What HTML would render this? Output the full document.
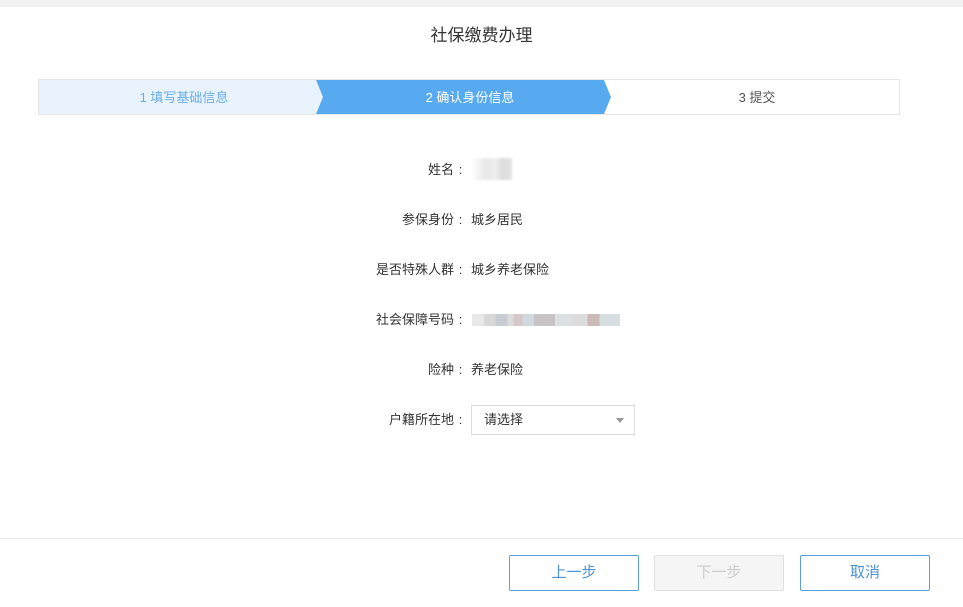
<!DOCTYPE html>
<html><head><meta charset="utf-8"><style>
body{margin:0;width:963px;height:607px;background:#fff;font-family:"Liberation Sans","Noto Sans CJK SC",sans-serif;position:relative;overflow:hidden;color:#333}
.top{position:absolute;left:0;top:0;width:963px;height:7px;background:#f2f2f2}
.title{position:absolute;top:21px;left:0;width:963px;text-align:center;font-size:17px;color:#333}
.steps{position:absolute;left:38px;top:79px;width:860px;height:34px;border:1px solid #e6e6e6}
.row{position:absolute;left:0;width:467px;text-align:right;font-size:13px;line-height:16px;color:#333}
.row i{font-style:normal;display:inline-block;width:13px;text-align:center}
.val{position:absolute;left:471px;font-size:13px;line-height:16px;color:#333}
.blur{position:absolute;height:12px}
.sel{position:absolute;left:471px;top:405px;width:162px;height:28px;border:1px solid #ddd;font-size:13px;line-height:28px;box-sizing:content-box}
.line{position:absolute;left:0;top:538px;width:963px;height:1px;background:#e8e8e8}
.btn{position:absolute;top:555px;width:128px;height:34px;border:1px solid #5aa1dc;border-radius:2px;text-align:center;line-height:34px;font-size:15px;color:#4d94d6;background:#fff}
</style></head><body>
<div class="top"></div>
<div class="title">社保缴费办理</div>
<div class="steps">
<svg width="860" height="34" style="position:absolute;left:0;top:0">
<polygon points="0,0 277,0 284,17 277,34 0,34" fill="#e8f3fd"/>
<polygon points="277,0 565,0 572,17 565,34 277,34 284,17" fill="#57aaf0"/>
<text x="145" y="22" font-size="13" fill="#6aaee6" text-anchor="middle" font-family="Liberation Sans, Noto Sans CJK SC, sans-serif">1 填写基础信息</text>
<text x="431" y="22" font-size="13" fill="#fff" text-anchor="middle" font-family="Liberation Sans, Noto Sans CJK SC, sans-serif">2 确认身份信息</text>
<text x="718" y="22" font-size="13" fill="#555" text-anchor="middle" font-family="Liberation Sans, Noto Sans CJK SC, sans-serif">3 提交</text>
</svg></div>
<div class="row" style="top:162px">姓名<i>:</i></div>
<div class="blur" style="left:474px;top:158px;width:38px;height:22px;background:linear-gradient(90deg,#fafafa,#e8e8e8 30%,#eee 55%,#dcdcdc 75%,#e4e4e4);filter:blur(1px)"></div>
<div class="row" style="top:212px">参保身份<i>:</i></div><div class="val" style="top:212px">城乡居民</div>
<div class="row" style="top:262px">是否特殊人群<i>:</i></div><div class="val" style="top:262px">城乡养老保险</div>
<div class="row" style="top:312px">社会保障号码<i>:</i></div>
<div class="blur" style="left:472px;top:314px;width:148px;background:linear-gradient(90deg,#e8e8e8 0 8%,#d8d8d8 8% 16%,#c9ccd1 16% 24%,#ddd 24% 28%,#d5c8c6 28% 34%,#d0dadd 34% 42%,#c8c4c6 42% 56%,#dde0e2 56% 68%,#dcdcdc 68% 78%,#c9b9b8 78% 86%,#d8dde0 86%)"></div>
<div class="row" style="top:362px">险种<i>:</i></div><div class="val" style="top:362px">养老保险</div>
<div class="row" style="top:412px">户籍所在地<i>:</i></div>
<div class="sel"><span style="margin-left:12px">请选择</span><span style="position:absolute;right:10px;top:12px;width:0;height:0;border-left:4px solid transparent;border-right:4px solid transparent;border-top:5px solid #999"></span></div>
<div class="line"></div>
<div class="btn" style="left:509px">上一步</div>
<div class="btn" style="left:654px;border-color:#e0e0e0;background:#f5f5f5;color:#ccc">下一步</div>
<div class="btn" style="left:800px">取消</div>
</body></html>
